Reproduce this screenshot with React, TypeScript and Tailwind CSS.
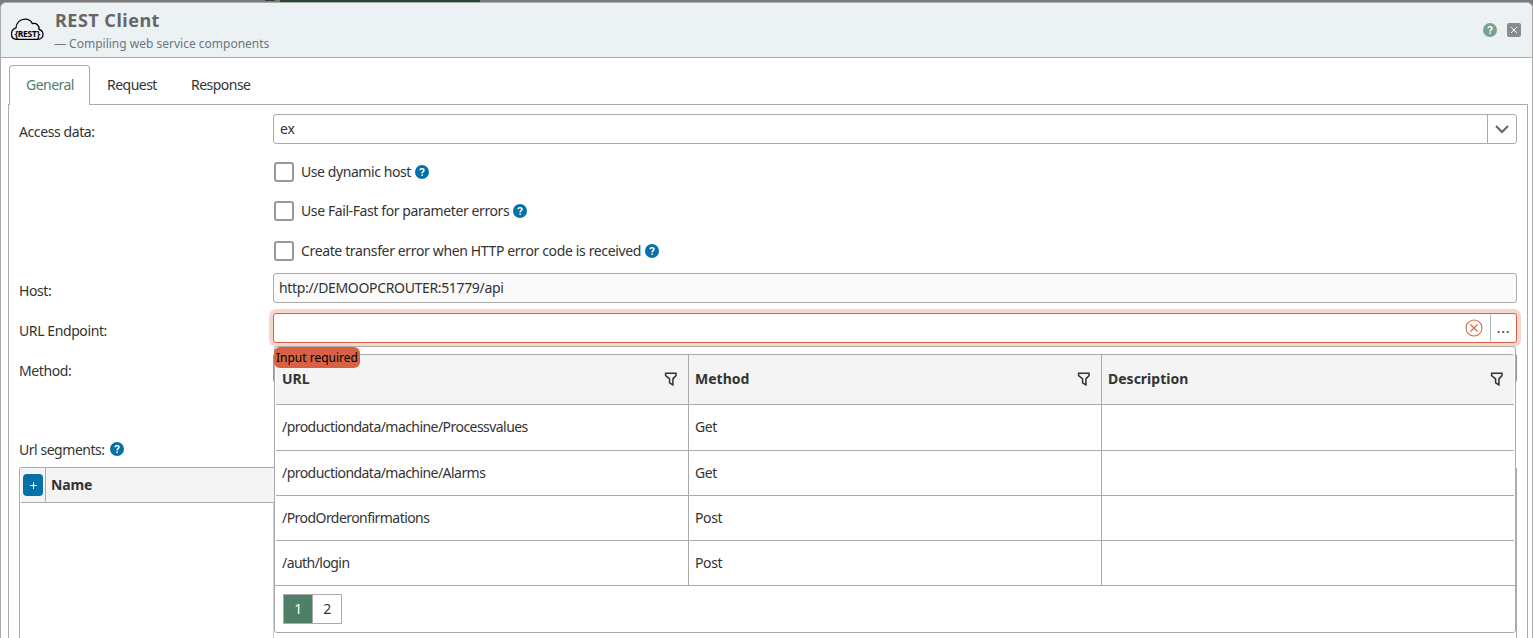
import { useState } from 'react';
import type { ReactNode } from 'react';

const tabs = [
  { name: 'General', width: 'w-[81px]' },
  { name: 'Request', width: 'w-[84px]' },
  { name: 'Response', width: 'w-[94px]' },
];

const options = [
  { label: 'Use dynamic host', style: 'mb-[19px] tracking-[-0.42px]' },
  { label: 'Use Fail-Fast for parameter errors', style: 'mb-5 tracking-[-0.4px]' },
  { label: 'Create transfer error when HTTP error code is received', style: 'mb-3 tracking-[-0.36px]' },
];

const endpoints = [
  { url: '/productiondata/machine/Processvalues', method: 'Get', description: '' },
  { url: '/productiondata/machine/Alarms', method: 'Get', description: '' },
  { url: '/ProdOrderonfirmations', method: 'Post', description: '' },
  { url: '/auth/login', method: 'Post', description: '' },
];

function HelpIcon({ className = 'bg-[#0571a6]' }: { className?: string }) {
  return (
    <span className={`flex size-3.5 shrink-0 items-center justify-center rounded-full ${className}`}>
      <svg width="14" height="14" viewBox="0 0 14 14" fill="none" stroke="white" strokeWidth="1.5">
        <path d="M5 5.2C5.1 3.2 9 3.2 9 5.3C9 6.7 7.1 6.6 7.1 8.4" />
        <path d="M7.1 9.4V10.9" />
      </svg>
    </span>
  );
}

function CloudIcon() {
  return (
    <svg width="34" height="24" viewBox="0 0 34 24" fill="none">
      <path
        d="M6.5 21.3H28C31 21.3 33 19 33 16.5C33 13.7 31.4 12 29 11.3C29.4 7.5 26.5 4.6 22.4 5.6C21 2.7 18.2 1.2 15.2 1.2C10 1.2 6.3 4.8 6 9.8C3.3 10.6 1.5 12.8 1.5 16C1.5 19.3 3.5 21.3 6.5 21.3Z"
        stroke="black"
        strokeWidth="1.3"
      />
      <text
        x="17.2"
        y="18.6"
        textAnchor="middle"
        textLength="25"
        lengthAdjust="spacingAndGlyphs"
        fontSize="9.5"
        fontWeight="700"
        fill="black"
      >
        {'{REST}'}
      </text>
    </svg>
  );
}

function FilterIcon() {
  return (
    <svg width="14" height="14" viewBox="0 0 14 14" fill="none" stroke="#333" strokeWidth="1.5">
      <path d="M1.6 1.2H12V3.6L8.9 6.9V12.9L5.6 10.9V6.9L1.6 3.6Z" />
    </svg>
  );
}

function Field({ label, children }: { label: string; children?: ReactNode }) {
  return (
    <div className="mb-2.5 flex h-[30px]">
      <div className="w-[254px] shrink-0 pt-2 leading-5">{label}</div>
      {children}
    </div>
  );
}

function EndpointPopup() {
  const [page, setPage] = useState(1);

  return (
    <div className="absolute top-8 left-0 h-[287px] w-[1242px] rounded-[3px] border border-[#ababab] bg-white pt-[7px]">
      <div className="mx-px grid h-[51px] grid-cols-[413px_413px_1fr] rounded-t-xs border-y border-[#ababab] bg-[#f4f4f4] font-bold tracking-normal">
        {['URL', 'Method', 'Description'].map((name, i) => (
          <div
            key={name}
            className={`flex items-center justify-between pr-2.5 pb-0.5 pl-1.5 ${i < 2 ? 'border-r border-[#ababab]' : ''}`}
          >
            <span>{name}</span>
            <FilterIcon />
          </div>
        ))}
      </div>
      {endpoints.map((row, i) => (
        <div
          key={row.url}
          className={`grid grid-cols-[413px_413px_1fr] border-b border-[#ababab] ${i === 0 ? 'h-[46px]' : 'h-[45px]'} ${i < 3 ? 'mx-px' : 'px-px'}`}
        >
          <div className={`flex items-center border-r border-[#ababab] pl-1.5 tracking-[-0.55px] ${i === 0 ? 'pb-0.5' : ''}`}>
            {row.url}
          </div>
          <div className={`flex items-center border-r border-[#ababab] pl-1.5 ${i === 0 ? 'pb-0.5' : ''}`}>{row.method}</div>
          <div className="flex items-center pl-1.5">{row.description}</div>
        </div>
      ))}
      <div className="mt-2 ml-2 flex h-[30px] w-[59px] border border-[#ababab]">
        {[1, 2].map(n => (
          <button
            key={n}
            onClick={() => setPage(n)}
            className={`flex-1 ${n === 1 ? 'border-r border-[#ababab]' : ''} ${page === n ? 'bg-[#4d8067] text-white' : 'bg-white'}`}
          >
            {n}
          </button>
        ))}
      </div>
    </div>
  );
}

export default function App() {
  const [active, setActive] = useState('General');

  return (
    <div className="flex h-[638px] w-[1533px] flex-col overflow-hidden bg-[#7c7c7c] font-['Noto_Sans',sans-serif] text-sm tracking-[-0.4px] text-[#333]">
      <div className="flex h-0.5 shrink-0">
        <div className="ml-[265px] h-px w-2.5 bg-[#264532]" />
        <div className="ml-[5px] w-[200px] bg-[#264532]" />
      </div>
      <div className="flex flex-1 flex-col rounded-t-md border border-b-0 border-[#ababab] bg-white">
        <header className="flex h-[55px] shrink-0 items-center rounded-t-md border-b border-[#ababab] bg-[#ecf1f4] pr-[11px] pl-[9px]">
          <CloudIcon />
          <div className="ml-2.5 flex-1 pt-0.5">
            <h1 className="pl-px text-lg leading-6 font-bold tracking-[0.5px] text-[#666]">REST Client</h1>
            <p className="mt-0.5 text-xs leading-5 tracking-normal text-[#6b7680]">— Compiling web service components</p>
          </div>
          <HelpIcon className="bg-[#7aa38f]" />
          <span className="ml-2.5 flex size-3.5 items-center justify-center rounded-xs bg-[#8c8c8f]">
            <svg width="8" height="8" viewBox="0 0 8 8" stroke="white" strokeWidth="1">
              <path d="M1 1L7 7M7 1L1 7" />
            </svg>
          </span>
        </header>

        <nav className="relative z-10 mt-[7px] -mb-px ml-2 flex h-10 shrink-0 tracking-[-0.52px]">
          {tabs.map(({ name, width }) => (
            <button
              key={name}
              onClick={() => setActive(name)}
              className={`rounded-t border border-b-0 pb-0.5 pl-4 text-left ${width} ${active === name ? 'border-[#ababab] bg-white text-[#4d8067]' : 'border-transparent'}`}
            >
              {name}
            </button>
          ))}
        </nav>

        <main className="mr-1 ml-[7px] flex flex-1 flex-col border border-b-0 border-[#ababab] px-2.5 pt-[9px]">
          <Field label="Access data:">
            <div className="flex flex-1 rounded-[3px] border border-[#ababab]">
              <span className="flex-1 pt-1 pl-1.5 leading-5 tracking-normal">ex</span>
              <span className="flex w-[29px] items-center justify-center border-l border-[#ababab]">
                <svg width="14" height="9" viewBox="0 0 14 9" fill="none" stroke="#666" strokeWidth="2">
                  <path d="M1 1L7 7L13 1" />
                </svg>
              </span>
            </div>
          </Field>

          <div className="mt-2 ml-[255px]">
            {options.map(({ label, style }) => (
              <label key={label} className={`flex h-5 items-center ${style}`}>
                <input type="checkbox" className="size-5 appearance-none rounded-[3px] border-2 border-[#999]" />
                <span className="mr-1 ml-[7px]">{label}</span>
                <HelpIcon />
              </label>
            ))}
          </div>

          <Field label="Host:">
            <div className="flex-1 rounded-[3px] border border-[#ababab] bg-[#fafafa] pt-1 pl-[5px] leading-5 tracking-[-0.34px]">
              http://DEMOOPCROUTER:51779/api
            </div>
          </Field>

          <Field label="URL Endpoint:">
            <div className="relative z-20 flex flex-1 rounded-[3px] border border-[#d86143] bg-white shadow-[0_0_0_4px_#f6d6ce]">
              <span className="flex flex-1 items-center justify-end pr-[7px]">
                <svg width="18" height="18" viewBox="0 0 18 18" fill="none" stroke="#d86143" strokeWidth="1.1">
                  <circle cx="9" cy="9" r="8" />
                  <path d="M5.5 5.5L12.5 12.5M12.5 5.5L5.5 12.5" />
                </svg>
              </span>
              <span className="flex w-[26px] items-center justify-center border-l border-[#a8bdb5] tracking-[0.8px]">...</span>
              <EndpointPopup />
              <span className="absolute top-[33px] left-0 h-[21px] w-[86px] rounded-md bg-[#d86143] pl-0.5 text-xs leading-[21px] tracking-normal whitespace-nowrap text-black">
                Input required
              </span>
            </div>
          </Field>

          <Field label="Method:">
            <div className="flex-1 rounded-[3px] border border-[#999]" />
          </Field>

          <div className="mt-[46px] flex h-5 items-center gap-[5px] tracking-[-0.46px]">
            <span className="pt-0.5">Url segments:</span>
            <HelpIcon />
          </div>
          <div className="mt-2 flex flex-1 flex-col rounded-t-[3px] border border-b-0 border-[#ababab] px-px">
            <div className="flex h-[35px] border-b border-[#ababab] bg-[#f4f4f4] font-bold tracking-[-0.1px]">
              <div className="flex w-[25px] items-center border-r border-[#ababab] pl-0.5">
                <button className="flex h-[22px] w-5 items-center justify-center rounded bg-[#0571a6]">
                  <svg width="7" height="7" viewBox="0 0 7 7" stroke="white">
                    <path d="M3.5 0V7M0 3.5H7" />
                  </svg>
                </button>
              </div>
              <div className="flex items-center pl-[5px]">Name</div>
            </div>
            <div className="w-[253px] flex-1 border-r border-[#ccc]" />
          </div>
        </main>
      </div>
    </div>
  );
}
